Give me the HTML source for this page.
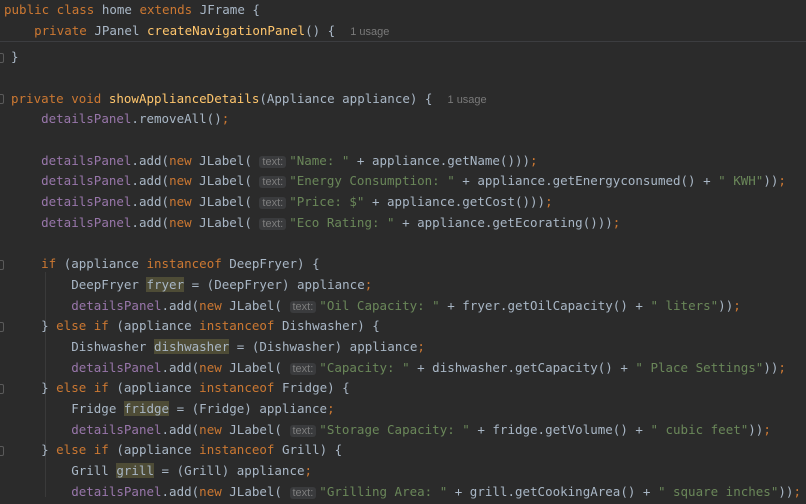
<!DOCTYPE html>
<html><head><meta charset="utf-8"><style>
body{margin:0;width:806px;height:500px;overflow:hidden;background:#2b2b2b;font-family:"DejaVu Sans Mono","Liberation Mono",monospace;font-size:12.5px;color:#a9b7c6;position:relative}
.l{position:absolute;left:0;height:20.7px;line-height:20.7px;white-space:pre}
.k{color:#cc7832}.m{color:#ffc66d}.f{color:#9876aa}.s{color:#6a8759}.u{font-family:"Liberation Sans",sans-serif;font-size:11px;color:#7a7a7a}
.h{font-family:"Liberation Sans",sans-serif;font-size:11px;color:#7d7d7d;background:#3a3b3d;border-radius:3px;padding:0 3px;margin-right:3px}
.v{background:#4e4c36}
#hd{position:absolute;left:0;top:0;width:806px;height:41px;background:#2b2b2b;border-bottom:1px solid #3c3d40;z-index:2}
.g{position:absolute;width:1px;background:#3a3a3a}
.fd{position:absolute;left:0;width:3px;height:8px;border:1px solid #5a5a5a;border-left:none;border-radius:0 2px 2px 0}
</style></head><body>
<div id="hd">
<div class="l" style="top:0;left:4px"><span class="k">public class </span>home <span class="k">extends </span>JFrame {</div>
<div class="l" style="top:21px;left:4px">    <span class="k">private </span>JPanel <span class="m">createNavigationPanel</span>() {  <span class="u">1 usage</span></div>
</div>
<div class="g" style="left:45px;top:272px;height:225px"></div>
<div class="fd" style="top:53px"></div><div class="fd" style="top:94px"></div>
<div class="fd" style="top:260px"></div><div class="fd" style="top:322px"></div><div class="fd" style="top:384px"></div><div class="fd" style="top:446px"></div>
<div class="l" style="top:47px;left:11px">}</div>
<div class="l" style="top:88.5px;left:11px"><span class="k">private void </span><span class="m">showApplianceDetails</span>(Appliance appliance) {  <span class="u">1 usage</span></div>
<div class="l" style="top:109.2px;left:11px">    <span class="f">detailsPanel</span>.removeAll()<span class="k">;</span></div>
<div class="l" style="top:150.6px;left:11px">    <span class="f">detailsPanel</span>.add(<span class="k">new </span>JLabel( <span class="h">text:</span><span class="s">"Name: "</span> + appliance.getName()))<span class="k">;</span></div>
<div class="l" style="top:171.3px;left:11px">    <span class="f">detailsPanel</span>.add(<span class="k">new </span>JLabel( <span class="h">text:</span><span class="s">"Energy Consumption: "</span> + appliance.getEnergyconsumed() + <span class="s">" KWH"</span>))<span class="k">;</span></div>
<div class="l" style="top:192px;left:11px">    <span class="f">detailsPanel</span>.add(<span class="k">new </span>JLabel( <span class="h">text:</span><span class="s">"Price: $"</span> + appliance.getCost()))<span class="k">;</span></div>
<div class="l" style="top:212.7px;left:11px">    <span class="f">detailsPanel</span>.add(<span class="k">new </span>JLabel( <span class="h">text:</span><span class="s">"Eco Rating: "</span> + appliance.getEcorating()))<span class="k">;</span></div>
<div class="l" style="top:254.1px;left:11px">    <span class="k">if </span>(appliance <span class="k">instanceof </span>DeepFryer) {</div>
<div class="l" style="top:274.8px;left:11px">        DeepFryer <span class="v">fryer</span> = (DeepFryer) appliance<span class="k">;</span></div>
<div class="l" style="top:295.5px;left:11px">        <span class="f">detailsPanel</span>.add(<span class="k">new </span>JLabel( <span class="h">text:</span><span class="s">"Oil Capacity: "</span> + fryer.getOilCapacity() + <span class="s">" liters"</span>))<span class="k">;</span></div>
<div class="l" style="top:316.2px;left:11px">    } <span class="k">else if </span>(appliance <span class="k">instanceof </span>Dishwasher) {</div>
<div class="l" style="top:336.9px;left:11px">        Dishwasher <span class="v">dishwasher</span> = (Dishwasher) appliance<span class="k">;</span></div>
<div class="l" style="top:357.6px;left:11px">        <span class="f">detailsPanel</span>.add(<span class="k">new </span>JLabel( <span class="h">text:</span><span class="s">"Capacity: "</span> + dishwasher.getCapacity() + <span class="s">" Place Settings"</span>))<span class="k">;</span></div>
<div class="l" style="top:378.3px;left:11px">    } <span class="k">else if </span>(appliance <span class="k">instanceof </span>Fridge) {</div>
<div class="l" style="top:399px;left:11px">        Fridge <span class="v">fridge</span> = (Fridge) appliance<span class="k">;</span></div>
<div class="l" style="top:419.7px;left:11px">        <span class="f">detailsPanel</span>.add(<span class="k">new </span>JLabel( <span class="h">text:</span><span class="s">"Storage Capacity: "</span> + fridge.getVolume() + <span class="s">" cubic feet"</span>))<span class="k">;</span></div>
<div class="l" style="top:440.4px;left:11px">    } <span class="k">else if </span>(appliance <span class="k">instanceof </span>Grill) {</div>
<div class="l" style="top:461.1px;left:11px">        Grill <span class="v">grill</span> = (Grill) appliance<span class="k">;</span></div>
<div class="l" style="top:481.8px;left:11px">        <span class="f">detailsPanel</span>.add(<span class="k">new </span>JLabel( <span class="h">text:</span><span class="s">"Grilling Area: "</span> + grill.getCookingArea() + <span class="s">" square inches"</span>))<span class="k">;</span></div>
</body></html>
